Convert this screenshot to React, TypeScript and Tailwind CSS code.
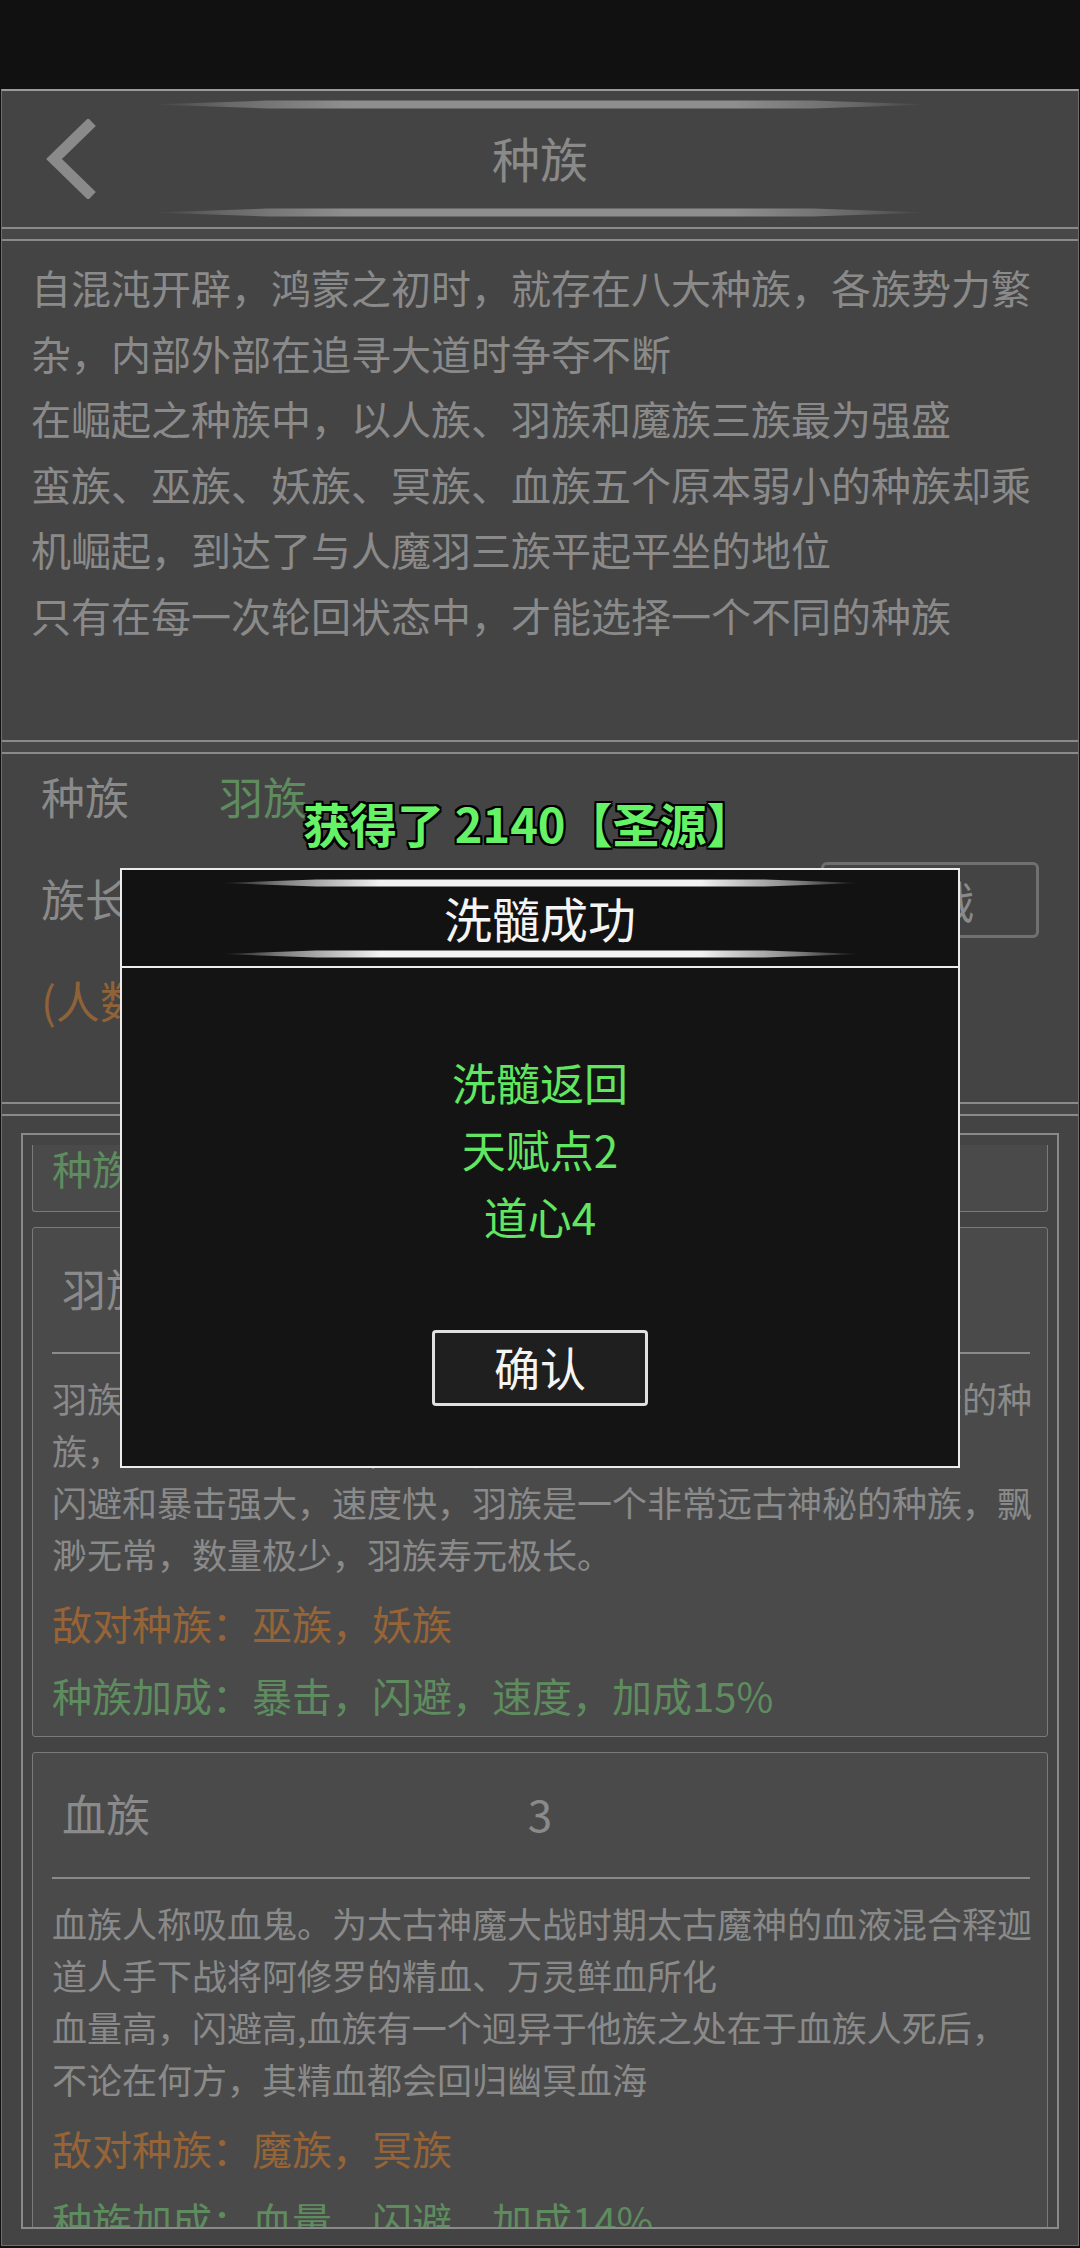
import React from 'react';

const sans = "font-['Noto_Sans_CJK_SC','Noto_Sans',sans-serif]";

const intro =
  '自混沌开辟，鸿蒙之初时，就存在八大种族，各族势力繁杂，内部外部在追寻大道时争夺不断\n在崛起之种族中，以人族、羽族和魔族三族最为强盛\n蛮族、巫族、妖族、冥族、血族五个原本弱小的种族却乘机崛起，到达了与人魔羽三族平起平坐的地位\n只有在每一次轮回状态中，才能选择一个不同的种族';

const races = [
  {
    name: '羽族',
    rank: '2',
    desc: '羽族乃天地间最早诞生的生灵之一，背生双翼，是最为古老的种族，天生亲近风之力，擅长身法。\n闪避和暴击强大，速度快，羽族是一个非常远古神秘的种族，飘渺无常，数量极少，羽族寿元极长。',
    enemy: '敌对种族：巫族，妖族',
    bonus: '种族加成：暴击，闪避，速度，加成15%',
  },
  {
    name: '血族',
    rank: '3',
    desc: '血族人称吸血鬼。为太古神魔大战时期太古魔神的血液混合释迦道人手下战将阿修罗的精血、万灵鲜血所化\n血量高，闪避高,血族有一个迥异于他族之处在于血族人死后，不论在何方，其精血都会回归幽冥血海',
    enemy: '敌对种族：魔族，冥族',
    bonus: '种族加成：血量，闪避，加成14%',
  },
];

// tapered brush stroke used above/below titles
function Deco({ id, width, thick, color }: { id: string; width: number; thick: number; color: string }) {
  const h = thick + 1;
  const m = h / 2;
  const t = thick / 2;
  const a = width * 0.15;
  const b = width * 0.85;
  return (
    <svg width={width} height={h} className="mx-auto block shrink-0">
      <defs>
        <linearGradient id={id} x1="0" x2="1" y1="0" y2="0">
          <stop offset="0" stopColor={color} stopOpacity="0" />
          <stop offset="0.1" stopColor={color} stopOpacity="0.5" />
          <stop offset="0.25" stopColor={color} stopOpacity="1" />
          <stop offset="0.75" stopColor={color} stopOpacity="1" />
          <stop offset="0.9" stopColor={color} stopOpacity="0.5" />
          <stop offset="1" stopColor={color} stopOpacity="0" />
        </linearGradient>
      </defs>
      <path
        d={`M0 ${m} L${a} ${m - t} L${b} ${m - t} L${width} ${m} L${b} ${m + t} L${a} ${m + t} Z`}
        fill={`url(#${id})`}
      />
    </svg>
  );
}

function Band() {
  return <div className="h-[14px] border-y-2 border-[#8a8a8a] bg-[#474747]" />;
}

function RaceCard({ name, rank, desc, enemy, bonus }: any) {
  return (
    <div className="rounded-[3px] border border-[#7a7a7a] bg-[#4a4a4a]">
      <div className="grid h-[124px] grid-cols-3 items-center pb-[4px] text-[44px] text-[#8a8a8a]">
        <span className="pl-[29px]">{name}</span>
        <span className="text-center">{rank}</span>
      </div>
      <div className="ml-[19px] mr-[17px] h-[2px] bg-[#8a8a8a]" />
      <div className="pb-[15px] pl-[19px] pr-[10px] pt-[18px]">
        <p className="whitespace-pre-line text-[35px] leading-[52px] text-[#8a8a8a]">{desc}</p>
        <p className="mt-[17px] text-[40px] leading-[52px] text-[#966437]">{enemy}</p>
        <p className="mt-[20px] text-[40px] leading-[52px] text-[#5f8c5f]">{bonus}</p>
      </div>
    </div>
  );
}

export default function App() {
  return (
    <div className={`relative h-[2248px] w-[1080px] overflow-hidden bg-[#111] ${sans}`}>
      <div className="h-[89px]" />

      <div className="mx-px h-[2157px] border-x border-b border-t-2 border-x-[#6e6e6e] border-b-[#6e6e6e] border-t-[#9a9a9a] bg-[#444]">
        {/* Header */}
        <div className="flex h-[136px] flex-col pb-[10px] pt-[9px]">
          <Deco id="hd-top" width={778} thick={8} color="#8e8e8e" />
          <div className="grid flex-1 grid-cols-[1fr_auto_1fr] items-center">
            <div className="pl-[38px]">
              <svg width="60" height="80" viewBox="0 0 60 80" className="block">
                <polyline points="52,3 14,40 52,77" fill="none" stroke="#8a8a8a" strokeWidth="11" strokeLinejoin="miter" />
              </svg>
            </div>
            <span className="pb-[4px] text-[48px] leading-none text-[#8a8a8a]">种族</span>
            <div />
          </div>
          <Deco id="hd-bot" width={778} thick={8} color="#8e8e8e" />
        </div>

        <Band />

        {/* Intro */}
        <div className="h-[499px] px-[29px] pt-[14px]">
          <p className="whitespace-pre-line text-[40px] leading-[65.5px] text-[#8a8a8a]">{intro}</p>
        </div>

        <Band />

        {/* Current race */}
        <div className="h-[348px] px-[39px] pt-[14px] text-[44px] text-[#8a8a8a]">
          <div className="flex h-[56px] items-center">
            <span className="w-[178px]">种族</span>
            <span className="text-[#5f8c5f]">羽族</span>
          </div>
          <div className="mt-[38px] flex h-[76px] items-center">
            <span className="w-[178px] pb-[5px]">族长</span>
            <span className="pb-[5px]">风无痕</span>
            <button className="ml-auto flex h-[76px] w-[218px] items-center justify-center rounded-[6px] border-[3px] border-[#707070] text-[#8a8a8a]">
              挑战
            </button>
          </div>
          <div className="mt-[34px] flex h-[56px] items-center text-[#8f6237]">(人数：1352)</div>
        </div>

        <Band />

        {/* Race list */}
        <div className="h-[1129px] px-[19px] pt-[17px]">
          <div className="h-[1096px] overflow-hidden border-2 border-[#8a8a8a] px-[9px] pt-[10px]">
            <div className="flex flex-col gap-[15px]">
              <div className="h-[67px] rounded-b-[3px] border-x border-b border-[#7a7a7a] bg-[#4a4a4a] pl-[19px] text-[40px] leading-[46px] text-[#5f8c5f]">
                种族加成：攻击，防御，加成12%
              </div>
              {races.map((r) => (
                <RaceCard key={r.name} {...r} />
              ))}
            </div>
          </div>
        </div>
      </div>

      {/* Reward toast */}
      <div className="absolute left-[303px] top-[799px] whitespace-nowrap text-[47px] font-bold leading-none text-[#66f266] [text-shadow:2px_2px_0_#000,-2px_-2px_0_#000,2px_-2px_0_#000,-2px_2px_0_#000,0_2px_0_#000,0_-2px_0_#000,2px_0_0_#000,-2px_0_0_#000]">
        获得了 2140【圣源】
      </div>

      {/* Result dialog */}
      <div className="absolute left-[120px] top-[868px] flex h-[600px] w-[840px] flex-col border-2 border-[#ececec] bg-[#141414]">
        <div className="flex h-[98px] flex-col border-b-2 border-[#ececec] bg-[#121212] pb-[8px] pt-[9px]">
          <Deco id="md-top" width={641} thick={7} color="#f2f2f2" />
          <div className="flex flex-1 items-center justify-center pb-[4px] text-[48px] leading-none text-[#f4f4f4]">洗髓成功</div>
          <Deco id="md-bot" width={641} thick={7} color="#f2f2f2" />
        </div>
        <div className="flex flex-col items-center pt-[81px]">
          <div className="text-center text-[44px] leading-[67px] text-[#61e661]">
            <p>洗髓返回</p>
            <p>天赋点2</p>
            <p>道心4</p>
          </div>
          <button className="mt-[80px] flex h-[76px] w-[216px] items-center justify-center rounded-[4px] border-[3px] border-[#e0e0e0] bg-[#1f1f1f] pb-[4px] text-[46px] text-[#f4f4f4]">
            确认
          </button>
        </div>
      </div>
    </div>
  );
}
